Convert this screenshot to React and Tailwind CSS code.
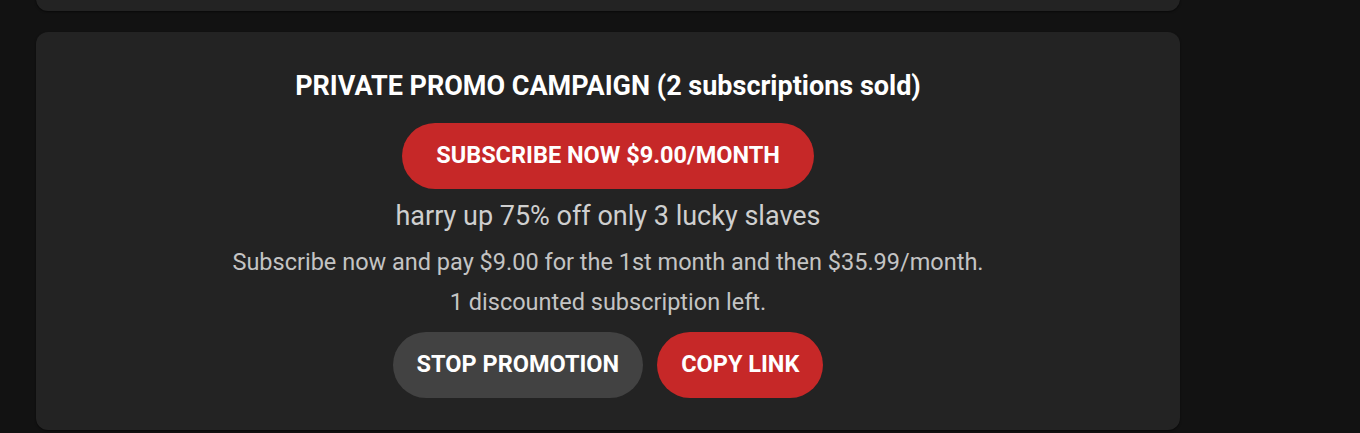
export default function App() {
  return (
    <div className="min-h-screen bg-[#121212] font-['Roboto',sans-serif] overflow-hidden">
      <div className="w-[1144px] ml-[36px] -mt-[40px] h-[51px] rounded-[12px] bg-[#232323] shadow-[0_1px_2px_rgba(0,0,0,0.5)]" />

      <div className="w-[1144px] ml-[36px] mt-[21px] rounded-[12px] bg-[#232323] shadow-[0_1px_2px_rgba(0,0,0,0.5)] pt-[38px] pb-[32px] flex flex-col items-center text-center">
        <h2 className="text-[27px] leading-[32px] font-bold text-white">
          PRIVATE PROMO CAMPAIGN (2 subscriptions sold)
        </h2>

        <button className="mt-[21px] h-[66px] px-[34px] rounded-full bg-[#c62828] text-white text-[23.5px] font-bold uppercase">
          Subscribe now $9.00/month
        </button>

        <p className="mt-[11px] text-[27px] leading-[32px] text-[#cfcfcf]">
          harry up 75% off only 3 lucky slaves
        </p>
        <p className="mt-[16px] text-[23.5px] leading-[28px] text-[#c4c4c4]">
          Subscribe now and pay $9.00 for the 1st month and then $35.99/month.
        </p>
        <p className="mt-[12px] text-[23.5px] leading-[28px] text-[#c4c4c4]">
          1 discounted subscription left.
        </p>

        <div className="mt-[16px] flex gap-[14px]">
          <button className="h-[66px] px-[24px] rounded-full bg-[#424242] text-white text-[23.5px] font-bold uppercase">
            Stop promotion
          </button>
          <button className="h-[66px] px-[24px] rounded-full bg-[#c62828] text-white text-[23.5px] font-bold uppercase">
            Copy link
          </button>
        </div>
      </div>
    </div>
  )
}
